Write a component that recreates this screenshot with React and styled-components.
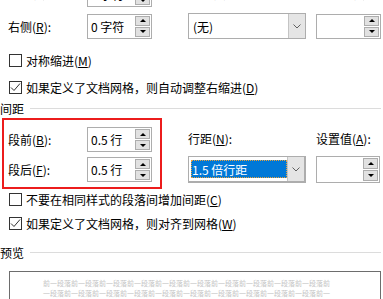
import React from "react";
import styled, { createGlobalStyle } from "styled-components";

const Global = createGlobalStyle`
  html, body { margin: 0; padding: 0; background: #fff; overflow: hidden; }
  body { font-family: "Noto Sans CJK SC", "Microsoft YaHei", sans-serif; font-size: 12px; color: #000; }
  * { box-sizing: border-box; }
`;

const Page = styled.div`
  width: 383px;
  height: 299px;
  overflow: hidden;
  display: flex;
  flex-direction: column;
  background: #fff;
  & > * { flex-shrink: 0; }
`;

const FormGrid = styled.div`
  display: grid;
  grid-template-columns: 79px 65px 36px 118px 10px 65px;
  align-items: center;
  padding-left: 8px;
  margin-top: ${(p) => p.$mt || 0}px;
  height: ${(p) => p.$h}px;
`;

const Label = styled.span`
  white-space: nowrap;
  line-height: 17px;
  grid-column: ${(p) => p.$col || "auto"};
  ${(p) => (p.$top ? `align-self: start; margin-top: ${p.$top}px;` : "")}
`;

const Key = styled.u`
  text-decoration: underline;
  text-underline-offset: 1px;
  text-decoration-thickness: 1px;
`;

const SpinBox = styled.div`
  width: ${(p) => p.$w || 65}px;
  height: ${(p) => p.$h || 25}px;
  border: 1px solid #adadad;
  background: #fff;
  display: flex;
  align-items: center;
  grid-column: ${(p) => p.$col || "auto"};
`;

const SpinText = styled.span`
  flex: 1;
  padding-left: 3px;
  line-height: 17px;
  white-space: nowrap;
`;

const SpinButtons = styled.div`
  display: flex;
  flex-direction: column;
  justify-content: center;
  gap: 1px;
  width: 15px;
  margin-right: 1px;
  align-self: stretch;
  padding: 1px 0;
`;

const SpinBtn = styled.div`
  flex: 1;
  max-height: ${(p) => p.$mh || 10}px;
  background: #e1e1e1;
  border: 1px solid #adadad;
  display: flex;
  align-items: center;
  justify-content: center;
`;

const Tri = styled.span`
  width: 0;
  height: 0;
  border-left: 3px solid transparent;
  border-right: 3px solid transparent;
  ${(p) => (p.$down ? "border-top: 3px solid #000;" : "border-bottom: 3px solid #000;")}
`;

const Select = styled.div`
  width: ${(p) => p.$w || 118}px;
  height: ${(p) => p.$h || 26}px;
  border-style: solid;
  border-color: #adadad;
  border-width: ${(p) => (p.$focused ? "1px 2px 2px 1px" : "1px")};
  background: #fff;
  display: flex;
  align-items: stretch;
  grid-column: ${(p) => p.$col || "auto"};
`;

const SelectText = styled.div`
  flex: 1;
  display: flex;
  align-items: center;
  padding: ${(p) => (p.$focused ? "3px 0 3px 2px" : "0 0 0 4px")};
  white-space: nowrap;
  line-height: 17px;
`;

const Highlight = styled.span`
  flex: 1;
  align-self: stretch;
  display: flex;
  align-items: center;
  padding-left: 1px;
  background: #0078d7;
  color: #fff;
  outline: 1px dotted #e8a23c;
  outline-offset: -1px;
`;

const ArrowBtn = styled.div`
  width: 17px;
  background: #e5e5e5;
  border-left: 1px solid #c4c4c4;
  display: flex;
  align-items: center;
  justify-content: center;
`;

const CheckRow = styled.label`
  display: flex;
  align-items: center;
  gap: 4px;
  height: 20px;
  padding-left: 9px;
  margin-top: ${(p) => p.$mt || 0}px;
  white-space: nowrap;
  line-height: 17px;
`;

const Box = styled.span`
  width: 13px;
  height: 13px;
  border: 1px solid #333;
  background: #fff;
  display: flex;
  align-items: center;
  justify-content: center;
  flex: none;
`;

const Heading = styled.div`
  display: flex;
  align-items: center;
  gap: 6px;
  height: 20px;
  padding-right: 2px;
  margin-top: ${(p) => p.$mt || 0}px;
  line-height: 17px;
  &::after {
    content: "";
    flex: 1;
    height: 1px;
    background: #dcdcdc;
  }
`;

const SpacingSection = styled.div`
  display: flex;
  align-items: flex-start;
  padding-left: 2px;
`;

const RedBox = styled.div`
  width: 160px;
  border: 2px solid #ec1c1c;
  padding: 7px 8px 5px 4px;
  display: grid;
  grid-template-columns: 79px 65px;
  row-gap: 5px;
  align-items: center;
`;

const LineSpacingGrid = styled.div`
  margin-left: 26px;
  margin-top: 10px;
  display: grid;
  grid-template-columns: 118px 10px 65px;
  grid-template-rows: 20px 27px;
  row-gap: 8px;
  align-items: center;
`;

const Preview = styled.div`
  margin: 9px 0 0 9px;
  width: 372px;
  height: 60px;
  border: 1px solid #6d6d6d;
  padding: 6px 0 0 33px;
`;

const PreviewLine = styled.div`
  font-size: 7px;
  line-height: 10px;
  height: 10px;
  color: #c4c4c4;
  white-space: nowrap;
  font-family: "Noto Sans CJK SC", serif;
`;

function Spin({ value, col, w, h }) {
  return (
    <SpinBox $col={col} $w={w} $h={h}>
      <SpinText>{value}</SpinText>
      <SpinButtons>
        <SpinBtn $mh={h ? 12 : 10}>
          <Tri />
        </SpinBtn>
        <SpinBtn $mh={h ? 12 : 10}>
          <Tri $down />
        </SpinBtn>
      </SpinButtons>
    </SpinBox>
  );
}

function Chevron() {
  return (
    <svg width="8" height="5" viewBox="0 0 8 5">
      <polyline points="0.5,0.5 4,4 7.5,0.5" fill="none" stroke="#606060" strokeWidth="1" />
    </svg>
  );
}

function Check({ checked, children, mt }) {
  return (
    <CheckRow $mt={mt}>
      <Box>
        {checked && (
          <svg width="11" height="11" viewBox="0 0 11 11">
            <polyline points="1,5.5 4,8.5 10,1.5" fill="none" stroke="#333" strokeWidth="1" />
          </svg>
        )}
      </Box>
      <span>{children}</span>
    </CheckRow>
  );
}

const line1 = "前" + "一段落前".repeat(10);
const line2 = "一段落前".repeat(10) + "一";

export default function App() {
  return (
    <>
      <Global />
      <Page>
        <FormGrid $mt={-18} $h={25}>
          <Label $top={2}>
            左侧(<Key>L</Key>):
          </Label>
          <Spin value="0 字符" />
          <Label $col="4" $top={2}>
            特殊(<Key>S</Key>):
          </Label>
          <Label $col="6" $top={2}>
            缩进值(<Key>Y</Key>):
          </Label>
        </FormGrid>
        <FormGrid $mt={6} $h={26}>
          <Label>
            右侧(<Key>R</Key>):
          </Label>
          <Spin value="0 字符" />
          <Select $col="4">
            <SelectText>(无)</SelectText>
            <ArrowBtn>
              <Chevron />
            </ArrowBtn>
          </Select>
          <Spin col="6" value="" />
        </FormGrid>

        <Check mt={11}>
          对称缩进(<Key>M</Key>)
        </Check>
        <Check mt={7} checked>
          如果定义了文档网格，则自动调整右缩进(<Key>D</Key>)
        </Check>

        <Heading $mt={1}>间距</Heading>

        <SpacingSection>
          <RedBox>
            <Label>
              段前(<Key>B</Key>):
            </Label>
            <Spin value="0.5 行" />
            <Label>
              段后(<Key>F</Key>):
            </Label>
            <Spin value="0.5 行" />
          </RedBox>
          <LineSpacingGrid>
            <Label $col="1">
              行距(<Key>N</Key>):
            </Label>
            <Label $col="3">
              设置值(<Key>A</Key>):
            </Label>
            <Select $col="1" $h={27} $focused>
              <SelectText $focused>
                <Highlight>1.5 倍行距</Highlight>
              </SelectText>
              <ArrowBtn>
                <Chevron />
              </ArrowBtn>
            </Select>
            <Spin col="3" value="" w={64} h={27} />
          </LineSpacingGrid>
        </SpacingSection>

        <Check>
          不要在相同样式的段落间增加间距(<Key>C</Key>)
        </Check>
        <Check mt={4} checked>
          如果定义了文档网格，则对齐到网格(<Key>W</Key>)
        </Check>

        <Heading $mt={9}>预览</Heading>

        <Preview>
          <PreviewLine>{line1}</PreviewLine>
          <PreviewLine>{line2}</PreviewLine>
        </Preview>
      </Page>
    </>
  );
}
